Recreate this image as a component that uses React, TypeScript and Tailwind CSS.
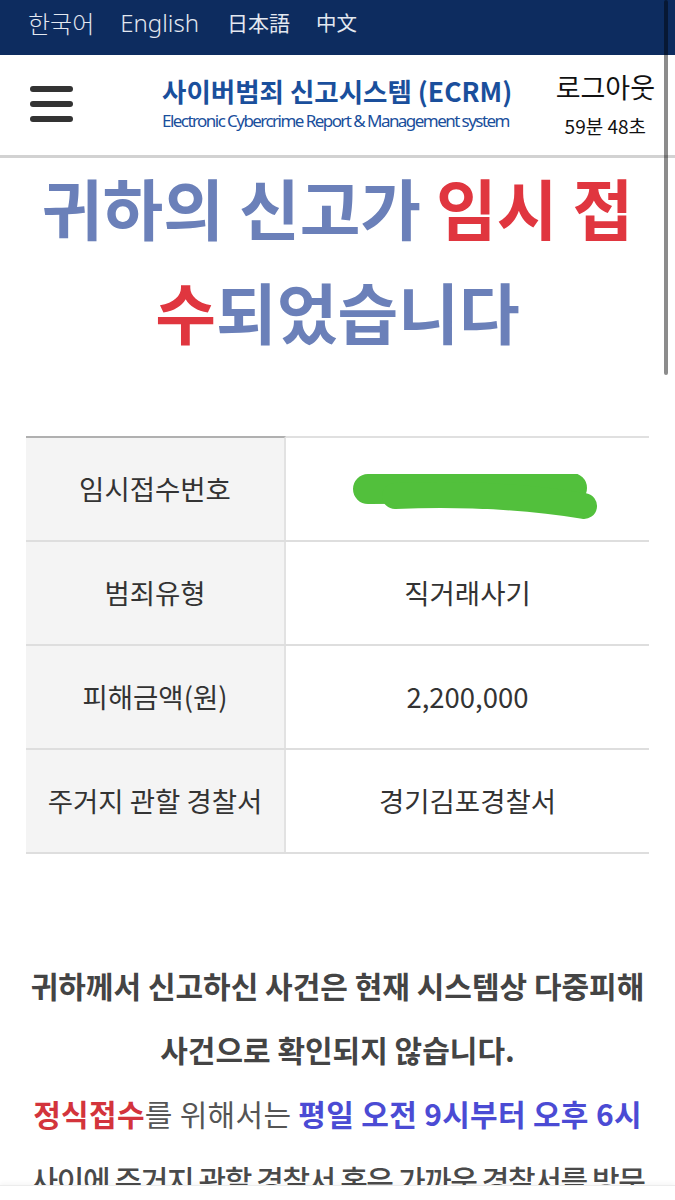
import React from "react";

const kr = "font-['Noto_Sans_CJK_KR','Noto_Sans',sans-serif]";

function Row({ label, children, first = false }: { label: string; children: React.ReactNode; first?: boolean }) {
  return (
    <div className={`flex h-[104px] ${first ? "" : "border-t-2 border-[#dedede]"}`}>
      <div
        className={`w-[260px] shrink-0 bg-[#f4f4f4] flex items-center justify-center border-r-2 border-[#e2e2e2] text-[27.5px] text-[#333] ${first ? "border-t-2 border-t-[#b0b0b0]" : ""}`}
      >
        {label}
      </div>
      <div className={`flex-1 flex items-center justify-center text-[27.5px] text-[#333] ${first ? "border-t-2 border-t-[#e0e0e0]" : ""}`}>
        {children}
      </div>
    </div>
  );
}

export default function App() {
  return (
    <div className={`relative w-[675px] h-[1200px] overflow-hidden bg-white ${kr}`}>
      {/* language bar */}
      <div className="h-[55px] bg-[#0d2c5f] flex items-center pl-[28px] pb-[10px] text-[24px] text-[#e3e8f0] font-light">
        <span>한국어</span>
        <span className="ml-[26px] font-['Noto_Sans',sans-serif]">English</span>
        <span className="ml-[28px] text-[21px] font-normal font-['Noto_Sans_CJK_JP',sans-serif]">日本語</span>
        <span className="ml-[26px] text-[20.5px] font-normal font-['Noto_Sans_CJK_SC',sans-serif]">中文</span>
      </div>

      {/* header */}
      <div className="h-[103px] border-b-[3px] border-[#d2d2d2] flex items-center">
        <div className="w-[162px] shrink-0 pl-[30px] flex flex-col gap-[9px] -mt-[2px]">
          <div className="w-[43px] h-[6px] rounded-full bg-[#333]" />
          <div className="w-[43px] h-[6px] rounded-full bg-[#333]" />
          <div className="w-[43px] h-[6px] rounded-full bg-[#333]" />
        </div>
        <div className="flex flex-col -mt-[4px]">
          <div className="text-[26.5px] font-bold text-[#1a4f9c] leading-[34px]">
            사이버범죄 신고시스템 (ECRM)
          </div>
          <div className="font-['Noto_Sans',sans-serif] text-[17px] text-[#1a4f9c] leading-[22px] tracking-[-1.55px] mt-[2px]">
            Electronic Cybercrime Report &amp; Management system
          </div>
        </div>
        <div className="ml-auto mr-[20px] flex flex-col items-center -mt-[2px]">
          <div className="text-[27px] text-[#111] leading-[34px]">로그아웃</div>
          <div className="text-[19px] text-[#111] leading-[24px] mt-[10px]">59분 48초</div>
        </div>
      </div>

      {/* headline */}
      <div className="text-center text-[66px] font-bold leading-[104px] text-[#6b80b9] -mt-[4px]">
        귀하의 신고가 <span className="text-[#e0363f]">임시 접</span>
        <br />
        <span className="text-[#e0363f]">수</span>되었습니다
      </div>

      {/* table */}
      <div className="mx-[26px] mt-[74px] border-b-2 border-[#dedede]">
        <Row label="임시접수번호" first>
          <svg width="250" height="50" viewBox="0 0 250 50" className="ml-[14px] translate-y-[10px]">
            <path d="M18 15 L 222 14" stroke="#52c03c" strokeWidth="30" strokeLinecap="round" fill="none" />
            <path d="M45 22 Q 150 18 234 32" stroke="#52c03c" strokeWidth="26" strokeLinecap="round" fill="none" />
          </svg>
        </Row>
        <Row label="범죄유형">직거래사기</Row>
        <Row label="피해금액(원)">
          <span>2,200,000</span>
        </Row>
        <Row label="주거지 관할 경찰서">경기김포경찰서</Row>
      </div>

      {/* paragraph */}
      <div className="mt-[99px] text-center text-[30px] leading-[64px] text-[#444]">
        <div className="font-bold">귀하께서 신고하신 사건은 현재 시스템상 다중피해</div>
        <div className="font-bold">사건으로 확인되지 않습니다.</div>
        <div className="tracking-[0.3px]">
          <span className="font-bold text-[#d3343c]">정식접수</span>
          <span className="text-[#555]">를 위해서는 </span>
          <span className="font-bold text-[#4b4bd4]">평일 오전 9시부터 오후 6시</span>
        </div>
        <div className="text-[#4a4a4a] font-medium tracking-[-1.4px] mt-[2px]">사이에 주거지 관할 경찰서 혹은 가까운 경찰서를 방문</div>
      </div>

      {/* scrollbar thumb */}
      <div className="absolute right-[7px] top-0 w-[4px] h-[375px] rounded-full bg-black/45" />

      {/* bottom browser edge */}
      <div className="absolute left-0 right-0 bottom-0 h-[15px] bg-white border-t border-[#ececec] shadow-[0_-2px_4px_rgba(0,0,0,0.04)]" />
    </div>
  );
}
